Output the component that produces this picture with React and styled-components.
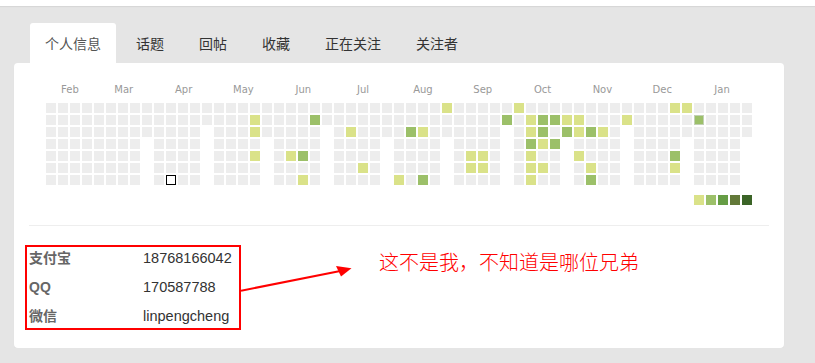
import React from 'react';
import styled, {createGlobalStyle} from 'styled-components';

const GlobalStyle = createGlobalStyle`
  body {
    margin: 0;
    background: #e5e5e5;
    font-family: "Liberation Sans", "Noto Sans CJK SC", sans-serif;
  }
`;

const COLORS = ['#ededed', '#dae289', '#9cc069', '#669d45', '#637939', '#3b6427'];

const MONTHS = ['Feb', 'Mar', 'Apr', 'May', 'Jun', 'Jul', 'Aug', 'Sep', 'Oct', 'Nov', 'Dec', 'Jan'];

const TABS = ['个人信息', '话题', '回帖', '收藏', '正在关注', '关注者'];

// columns that stop early (column index -> number of rows drawn)
const partial = {8: 3, 13: 2, 18: 3, 23: 2, 28: 3, 33: 3, 38: 2, 43: 3, 48: 2, 53: 3, 58: 3};

// "col-row": level
const levels = {
  '17-1': 1, '17-2': 1, '17-4': 1,
  '20-4': 1, '21-4': 2, '21-6': 1,
  '22-1': 2, '25-2': 1, '26-5': 1,
  '29-6': 1, '30-2': 2, '31-2': 1, '31-6': 2,
  '33-0': 1, '35-4': 1, '35-5': 1, '36-4': 1, '36-5': 1,
  '38-1': 2, '39-0': 1,
  '40-1': 1, '40-2': 1, '40-3': 2, '40-4': 1, '40-5': 1, '40-6': 1,
  '41-1': 2, '41-2': 2, '41-3': 1, '41-5': 1,
  '42-1': 2, '42-3': 2,
  '43-1': 1, '43-2': 2,
  '44-1': 1, '44-2': 1, '44-4': 1,
  '45-2': 2, '45-5': 1, '45-6': 2,
  '46-2': 1, '48-1': 1,
  '52-0': 1, '52-4': 2, '52-5': 1, '53-0': 1,
  '54-1': 2,
};

const buildCells = () => {
  const cells = [];
  for (let c = 0; c < 59; c++) {
    const rows = partial[c] || 7;
    for (let r = 0; r < 7; r++) {
      const key = `${c}-${r}`;
      if (r >= rows) cells.push({key, kind: 'none'});
      else if (c === 10 && r === 6) cells.push({key, kind: 'now'});
      else if (c === 54 && r === 1) cells.push({key, kind: 'hover', level: 2});
      else cells.push({key, kind: 'day', level: levels[key] || 0});
    }
  }
  return cells;
};

const TopBar = styled.div`
  height: 6px;
  background: #fff;
  box-shadow: 0 1px 1px rgba(0, 0, 0, 0.06);
`;

const Main = styled.div`
  padding: 17px 0 0 14px;
`;

const Tabs = styled.div`
  display: flex;
  gap: 5px;
  padding-left: 16px;
`;

const Tab = styled.div`
  height: 40px;
  line-height: 40px;
  padding: 0 15px;
  font-family: "Noto Sans CJK SC", sans-serif;
  font-size: 14px;
  color: ${p => p.$active ? '#555' : '#333'};
  background: ${p => p.$active ? '#fff' : 'transparent'};
  border-radius: 3px 3px 0 0;
`;

const Card = styled.div`
  width: 770px;
  box-sizing: border-box;
  background: #fff;
  border-radius: 4px;
  padding: 21px 15px 18px;
  box-shadow: 0 1px 1px rgba(0, 0, 0, 0.04);
`;

const Calendar = styled.div`
  margin-left: 17px;
  width: 706px;
`;

const MonthRow = styled.div`
  display: flex;
  height: 12px;
  margin-bottom: 7px;
`;

const Month = styled.span`
  width: ${p => p.$w}px;
  text-align: center;
  font-family: "DejaVu Sans", sans-serif;
  font-size: 10px;
  line-height: 12px;
  color: #999;
`;

const Grid = styled.div`
  display: grid;
  grid-template-rows: repeat(7, 10px);
  grid-auto-columns: 10px;
  grid-auto-flow: column;
  gap: 2px;
`;

const Cell = styled.div`
  width: 10px;
  height: 10px;
  box-sizing: border-box;
  background: ${p => p.$kind === 'none' ? 'transparent' : p.$kind === 'now' ? '#fff' : COLORS[p.$level]};
  border: ${p => p.$kind === 'now' ? '1px solid #000' : p.$kind === 'hover' ? '1px solid #c2d0b4' : 'none'};
`;

const Legend = styled.div`
  display: flex;
  justify-content: flex-end;
  gap: 2px;
  margin-top: 10px;
`;

const Divider = styled.div`
  height: 1px;
  background: #eee;
  margin-top: 20px;
`;

const Bottom = styled.div`
  display: flex;
  align-items: flex-start;
  margin-top: 19px;
`;

const InfoBox = styled.div`
  width: 216px;
  box-sizing: border-box;
  margin-left: -4px;
  border: 2px solid #f00;
  padding: 1px 2px 2px;
  display: flex;
  flex-direction: column;
  gap: 9px;
`;

const InfoRow = styled.div`
  display: flex;
  line-height: 20px;
`;

const Label = styled.span`
  width: 114px;
  font-size: 14px;
  font-weight: bold;
  color: #666;
`;

const Value = styled.span`
  font-size: 14.5px;
  color: #333;
`;

const Arrow = styled.svg`
  margin-top: 15px;
  flex-shrink: 0;
`;

const Note = styled.div`
  margin: 5px 0 0 25px;
  font-family: "Noto Sans CJK SC", serif;
  font-weight: 300;
  font-size: 20px;
  line-height: 24px;
  color: #f00;
`;

const App = () => {
  const cells = buildCells();
  return (
    <>
      <GlobalStyle />
      <TopBar />
      <Main>
        <Tabs>
          {TABS.map((t, i) => <Tab key={t} $active={i === 0}>{t}</Tab>)}
        </Tabs>
        <Card>
          <Calendar>
            <MonthRow>
              {MONTHS.map((m, i) => <Month key={m} $w={i === 0 ? 48 : 60}>{m}</Month>)}
            </MonthRow>
            <Grid>
              {cells.map(c => <Cell key={c.key} $kind={c.kind} $level={c.level} />)}
            </Grid>
            <Legend>
              {[1, 2, 3, 4, 5].map(l => <Cell key={l} $kind="day" $level={l} />)}
            </Legend>
          </Calendar>
          <Divider />
          <Bottom>
            <InfoBox>
              <InfoRow><Label>支付宝</Label><Value>18768166042</Value></InfoRow>
              <InfoRow><Label>QQ</Label><Value>170587788</Value></InfoRow>
              <InfoRow><Label>微信</Label><Value>linpengcheng</Value></InfoRow>
            </InfoBox>
            <Arrow width="113" height="36" viewBox="0 0 113 36">
              <line x1="0" y1="30.7" x2="98" y2="11.2" stroke="#f00" strokeWidth="2" />
              <polygon points="110.5,8.3 95,6 100,16.5" fill="#f00" />
            </Arrow>
            <Note>这不是我，不知道是哪位兄弟</Note>
          </Bottom>
        </Card>
      </Main>
    </>
  );
};

export default App;
